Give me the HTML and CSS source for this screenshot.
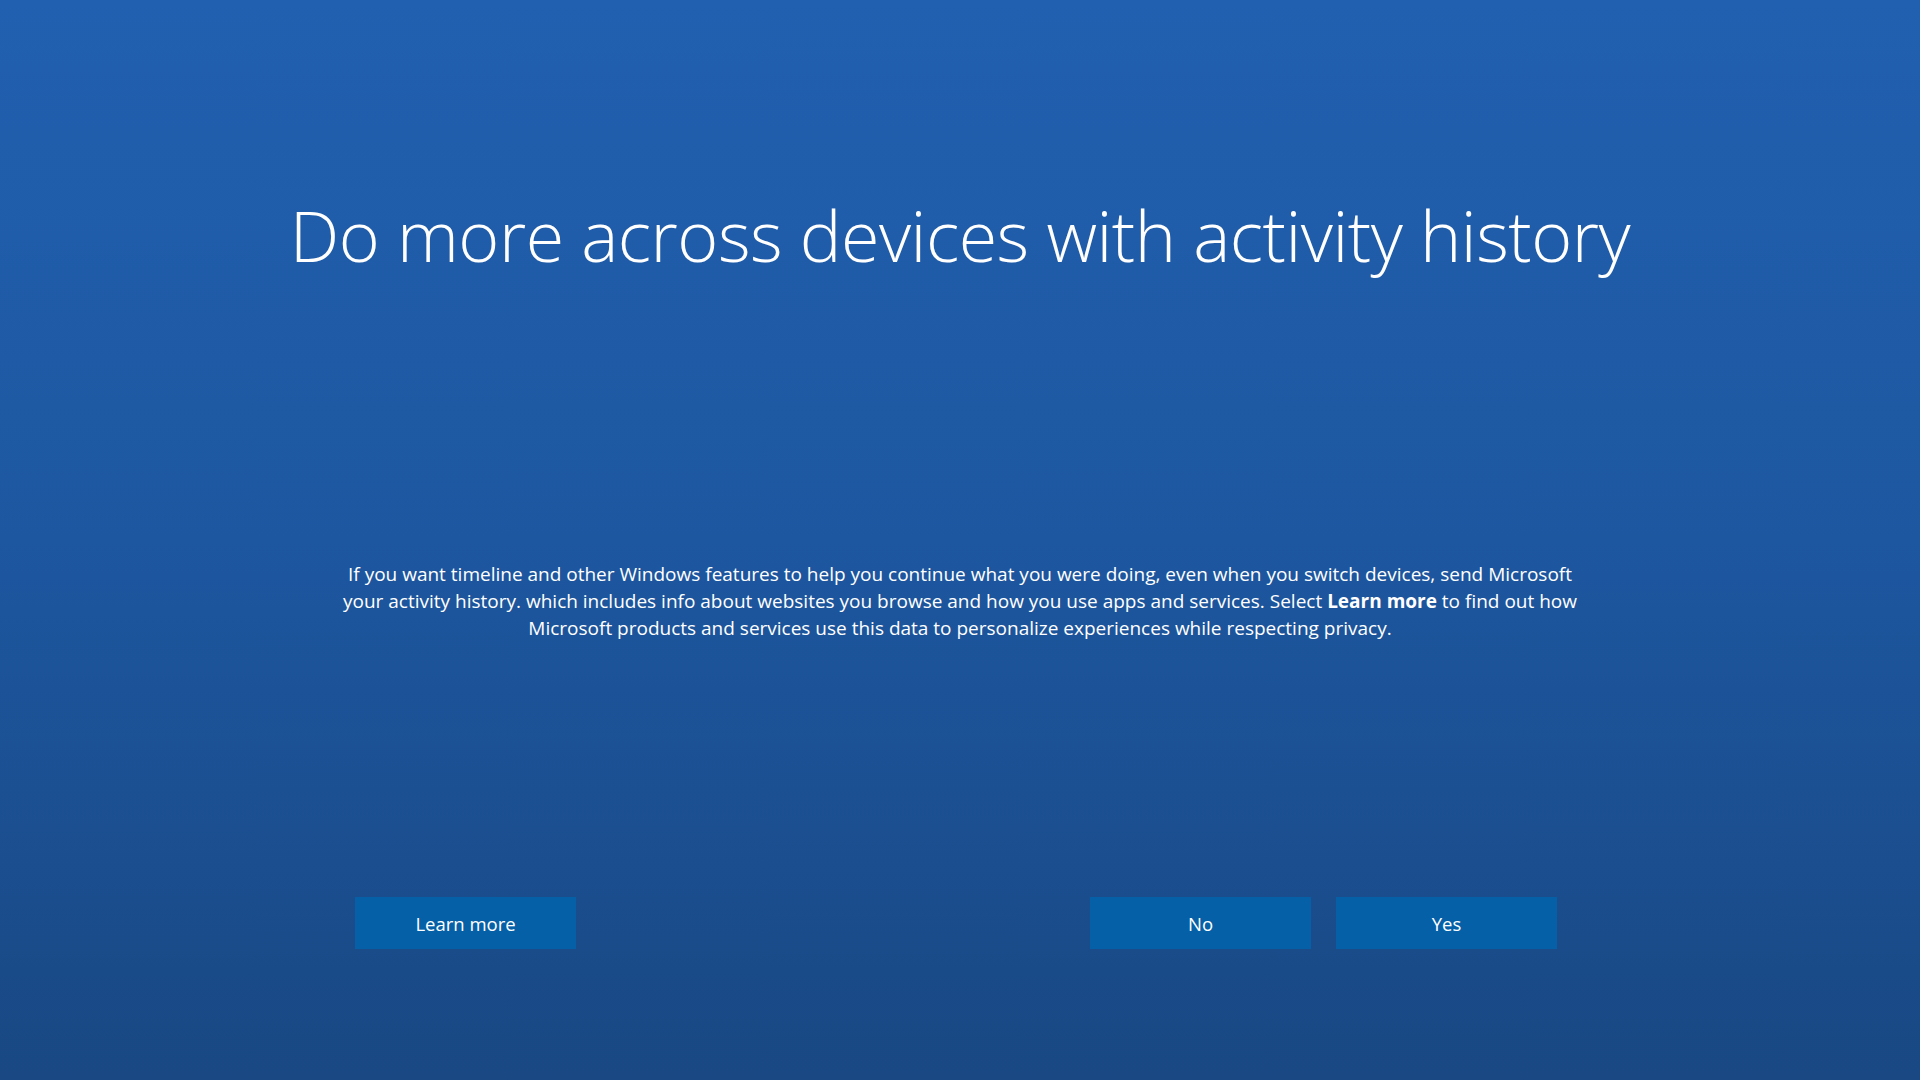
FILE: index.html
```html
<!DOCTYPE html>
<html lang="en">
<head>
<meta charset="utf-8">
<title>Activity history</title>
<link rel="stylesheet" href="styles.css">
</head>
<body>
<main class="oobe">
  <h1 class="title">Do more across devices with activity history</h1>
  <p class="desc">If you want timeline and other Windows features to help you continue what you were doing, even when you switch devices, send Microsoft<br>your activity history. which includes info about websites you browse and how you use apps and services. Select <b>Learn more</b> to find out how<br>Microsoft products and services use this data to personalize experiences while respecting privacy.</p>
  <div class="actions">
    <button class="btn">Learn more</button>
    <div class="right">
      <button class="btn">No</button>
      <button class="btn">Yes</button>
    </div>
  </div>
</main>
</body>
</html>
```
FILE: styles.css
```css
html, body {
  margin: 0;
  height: 100%;
}
body {
  background: linear-gradient(180deg, #2160b0 0%, #1d57a0 50%, #194883 100%);
  font-family: "Open Sans", "Noto Sans", sans-serif;
  color: #ffffff;
  overflow: hidden;
}
.oobe {
  height: 1080px;
  display: flex;
  flex-direction: column;
  align-items: center;
}
.title {
  margin: 189px 0 0;
  font-size: 70px;
  font-weight: 300;
  line-height: 92px;
  letter-spacing: -0.5px;
  text-align: center;
}
.desc {
  margin: 280px 0 0;
  font-size: 19px;
  line-height: 27px;
  text-align: center;
}
.desc b {
  font-weight: 700;
}
.actions {
  margin-top: 255px;
  width: 1202px;
  margin-left: -8px;
  display: flex;
  justify-content: space-between;
}
.right {
  display: flex;
  gap: 25px;
}
.btn {
  width: 221px;
  height: 52px;
  border: none;
  background: #0560a8;
  color: #ffffff;
  font-family: "Open Sans", "Noto Sans", sans-serif;
  font-size: 18.5px;
  padding: 0;
}
```
